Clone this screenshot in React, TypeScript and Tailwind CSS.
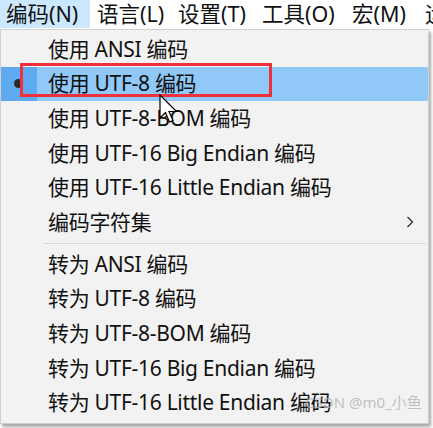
import React from "react";

const FONT = { fontFamily: '"Noto Sans", "Noto Sans CJK SC", sans-serif' };

type Item = { label: string; selected?: boolean; sub?: boolean };

const groupA: Item[] = [
  { label: "使用 ANSI 编码" },
  { label: "使用 UTF-8 编码", selected: true },
  { label: "使用 UTF-8-BOM 编码" },
  { label: "使用 UTF-16 Big Endian 编码" },
  { label: "使用 UTF-16 Little Endian 编码" },
  { label: "编码字符集", sub: true },
];

const groupB: Item[] = [
  { label: "转为 ANSI 编码" },
  { label: "转为 UTF-8 编码" },
  { label: "转为 UTF-8-BOM 编码" },
  { label: "转为 UTF-16 Big Endian 编码" },
  { label: "转为 UTF-16 Little Endian 编码" },
];

function Row({ item }: { item: Item }) {
  return (
    <div
      className={`relative flex items-center h-[34.6px] ${
        item.selected ? "bg-[#90c8f8]" : ""
      }`}
    >
      <div
        className={`w-[36px] h-full flex items-center justify-center shrink-0 ${
          item.selected ? "bg-[#5eaaf0]" : ""
        }`}
      >
        {item.selected && <div className="w-[9px] h-[9px] rounded-full bg-[#2b2b2b] ml-[-1px]" />}
      </div>
      <span className="ml-[11px] text-[21px] tracking-[-0.3px] leading-none text-[#111] whitespace-nowrap">
        {item.label}
      </span>
      {item.sub && (
        <svg className="absolute right-[14px] top-1/2 -translate-y-1/2" width="8" height="13" viewBox="0 0 8 13">
          <path d="M1.5 1.5 L6.5 6.5 L1.5 11.5" fill="none" stroke="#333" strokeWidth="1.4" />
        </svg>
      )}
    </div>
  );
}

export default function App() {
  return (
    <div className="relative w-[433px] h-[428px] bg-white overflow-hidden" style={FONT}>
      {/* menu bar */}
      <div className="flex items-center h-[28px] text-[21.5px] leading-none text-[#111] whitespace-nowrap">
        <div className="shrink-0 w-[90px] h-full flex items-center pl-[6px] bg-[#cce8ff]">编码(N)</div>
        <div className="shrink-0 ml-[7px] w-[81px]">语言(L)</div>
        <div className="shrink-0 w-[84px]">设置(T)</div>
        <div className="shrink-0 w-[90px]">工具(O)</div>
        <div className="shrink-0 w-[73px]">宏(M)</div>
        <div className="shrink-0">运</div>
      </div>

      {/* dropdown */}
      <div className="relative w-[429px] mt-[1px] bg-[#f2f2f2] border border-[#cfcfcf] pt-[2px] pb-[3px] shadow-[2px_3px_3px_rgba(0,0,0,0.35)]">
        {groupA.map((it) => (
          <Row key={it.label} item={it} />
        ))}
        <div className="h-[7.5px] flex items-center pl-[43px] pr-[2px]">
          <div className="h-px w-full bg-[#d7d7d7]" />
        </div>
        {groupB.map((it) => (
          <Row key={it.label} item={it} />
        ))}
      </div>

      {/* red annotation box */}
      <div className="absolute left-[20px] top-[63px] w-[252px] h-[34px] border-[3px] border-[#f0303a]" />

      {/* mouse cursor */}
      <svg className="absolute left-[159px] top-[94px]" width="20" height="32" viewBox="0 0 20 32">
        <path
          d="M1 1 L1 24 L6.5 18.5 L10.5 28 L14 26.5 L10 17.5 L17.5 17.5 Z"
          fill="#fff"
          stroke="#000"
          strokeWidth="1.2"
          strokeLinejoin="miter"
        />
      </svg>

      {/* watermark */}
      <div className="absolute left-[305px] top-[395px] text-[15px] leading-none text-[#b4b4b4]/80 whitespace-nowrap">
        CSDN @m0_小鱼
      </div>
    </div>
  );
}
